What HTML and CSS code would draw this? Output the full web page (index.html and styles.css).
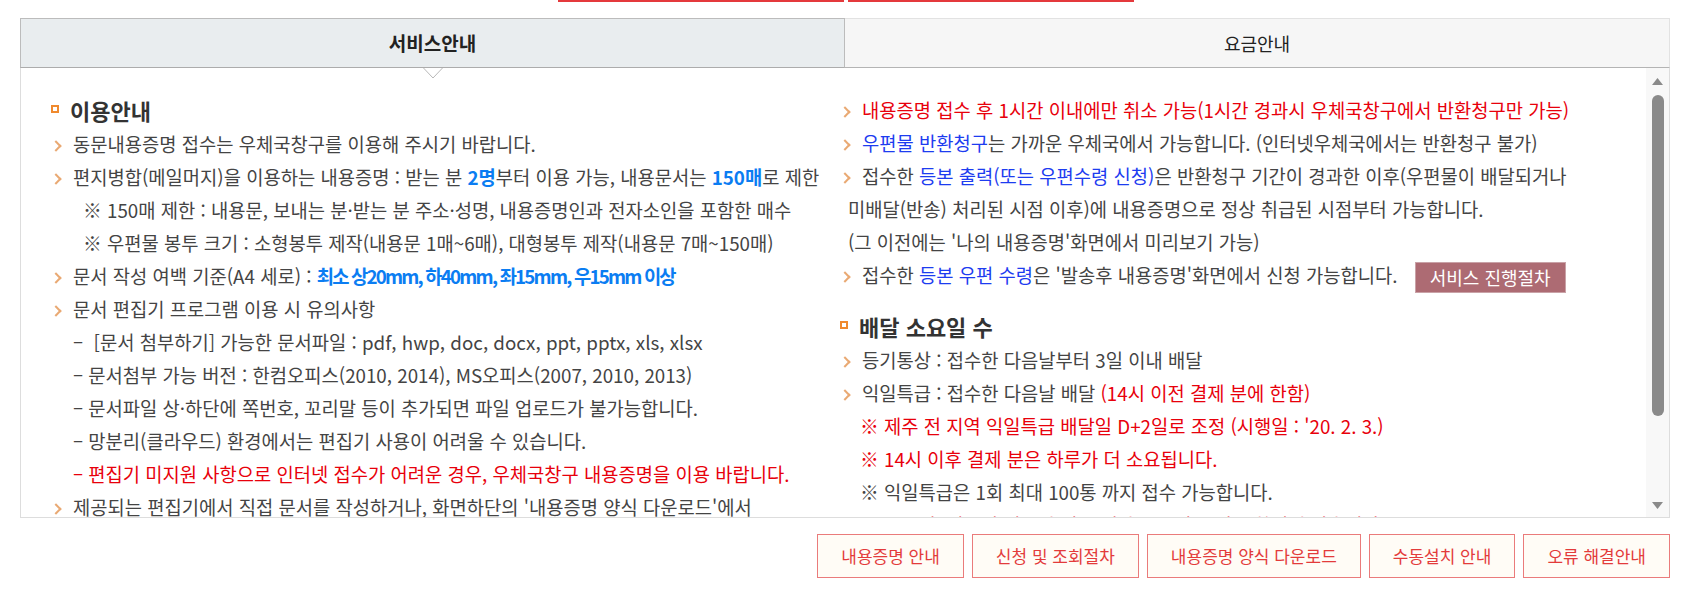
FILE: index.html
```html
<!DOCTYPE html>
<html lang="ko">
<head>
    <meta charset="UTF-8">
    <meta name="viewport" content="width=device-width, initial-scale=1.0">
    <title>내용증명 서비스안내</title>
    <link rel="stylesheet" href="styles.css">
</head>
<body>
    <div class="wrap">
        <!-- 상단 탭 밑줄 (위쪽 메뉴) -->
        <div class="top-line"><span></span><span></span></div>

        <!-- 탭 메뉴 -->
        <div class="tabs">
            <div class="tab on">서비스안내</div>
            <div class="tab">요금안내</div>
        </div>

        <!-- 안내 내용 -->
        <div class="panel">
            <svg class="tab-arrow" width="20" height="11" viewBox="0 0 20 11">
                <polyline points="0.5,0 10,10 19.5,0" fill="#fff" stroke="#b8b8b8" stroke-width="1"/>
            </svg>

            <div class="panel-body">
                <div class="col">
                    <h3 class="sec-title"><i class="sq"></i>이용안내</h3>
                    <ul class="list">
                        <li class="bul">동문내용증명 접수는 우체국창구를 이용해 주시기 바랍니다.</li>
                        <li class="bul">편지병합(메일머지)을 이용하는 내용증명 : 받는 분 <b class="hl">2명</b>부터 이용 가능, 내용문서는 <b class="hl">150매</b>로 제한</li>
                        <li class="note-in">※ 150매 제한 : 내용문, 보내는 분·받는 분 주소·성명, 내용증명인과 전자소인을 포함한 매수</li>
                        <li class="note-in">※ 우편물 봉투 크기 : 소형봉투 제작(내용문 1매~6매), 대형봉투 제작(내용문 7매~150매)</li>
                        <li class="bul">문서 작성 여백 기준(A4 세로) : <b class="hl narrow">최소 상20mm, 하40mm, 좌15mm, 우15mm 이상</b></li>
                        <li class="bul">문서 편집기 프로그램 이용 시 유의사항</li>
                        <li class="dash">–&nbsp; [문서 첨부하기] 가능한 문서파일 : pdf, hwp, doc, docx, ppt, pptx, xls, xlsx</li>
                        <li class="dash">– 문서첨부 가능 버전 : 한컴오피스(2010, 2014), MS오피스(2007, 2010, 2013)</li>
                        <li class="dash">– 문서파일 상·하단에 쪽번호, 꼬리말 등이 추가되면 파일 업로드가 불가능합니다.</li>
                        <li class="dash">– 망분리(클라우드) 환경에서는 편집기 사용이 어려울 수 있습니다.</li>
                        <li class="dash red">– 편집기 미지원 사항으로 인터넷 접수가 어려운 경우, 우체국창구 내용증명을 이용 바랍니다.</li>
                        <li class="bul">제공되는 편집기에서 직접 문서를 작성하거나, 화면하단의 '내용증명 양식 다운로드'에서</li>
                    </ul>
                </div>

                <div class="col">
                    <ul class="list">
                        <li class="bul red">내용증명 접수 후 1시간 이내에만 취소 가능(1시간 경과시 우체국창구에서 반환청구만 가능)</li>
                        <li class="bul"><span class="blue">우편물 반환청구</span>는 가까운 우체국에서 가능합니다. (인터넷우체국에서는 반환청구 불가)</li>
                        <li class="bul hang">접수한 <span class="blue">등본 출력(또는 우편수령 신청)</span>은 반환청구 기간이 경과한 이후(우편물이 배달되거나<br>미배달(반송) 처리된 시점 이후)에 내용증명으로 정상 취급된 시점부터 가능합니다.<br>(그 이전에는 '나의 내용증명'화면에서 미리보기 가능)</li>
                        <li class="bul">접수한 <span class="blue">등본 우편 수령</span>은 '발송후 내용증명'화면에서 신청 가능합니다. <a href="#" class="btn-proc">서비스 진행절차</a></li>
                    </ul>

                    <h3 class="sec-title mt"><i class="sq"></i>배달 소요일 수</h3>
                    <ul class="list">
                        <li class="bul">등기통상 : 접수한 다음날부터 3일 이내 배달</li>
                        <li class="bul">익일특급 : 접수한 다음날 배달 <span class="red">(14시 이전 결제 분에 한함)</span></li>
                        <li class="red">※ 제주 전 지역 익일특급 배달일 D+2일로 조정 (시행일 : '20. 2. 3.)</li>
                        <li class="red">※ 14시 이후 결제 분은 하루가 더 소요됩니다.</li>
                        <li>※ 익일특급은 1회 최대 100통 까지 접수 가능합니다.</li>
                        <li class="red">※ 토요일, 일요일 및 공휴일은 배달 소요일 수에 포함되지 않습니다.</li>
                    </ul>
                </div>
            </div>

            <!-- 스크롤바 -->
            <div class="scroll">
                <svg width="11" height="7" viewBox="0 0 11 7"><polygon points="5.5,0 11,7 0,7" fill="#8a8a8a"/></svg>
                <div class="thumb"></div>
                <div class="spacer"></div>
                <svg width="11" height="7" viewBox="0 0 11 7"><polygon points="0,0 11,0 5.5,7" fill="#8a8a8a"/></svg>
            </div>
        </div>

        <!-- 하단 버튼 -->
        <div class="links">
            <a href="#">내용증명 안내</a>
            <a href="#">신청 및 조회절차</a>
            <a href="#">내용증명 양식 다운로드</a>
            <a href="#">수동설치 안내</a>
            <a href="#">오류 해결안내</a>
        </div>
    </div>
</body>
</html>
```

FILE: styles.css
```css
/* 기본 */
* {
    box-sizing: border-box;
}

body {
    margin: 0;
    background: #fff;
    font-family: "Noto Sans CJK KR", "Noto Sans", sans-serif;
    color: #444;
}

.wrap {
    width: 1650px;
    margin-left: 20px;
}

/* 위쪽 메뉴 밑줄 */
.top-line {
    display: flex;
    gap: 4px;
    height: 2px;
    padding-left: 538px;
}

.top-line span {
    width: 286px;
    background: #e4393c;
}

/* 탭 메뉴 */
.tabs {
    display: grid;
    grid-template-columns: 1fr 1fr;
    margin-top: 16px;
}

.tab {
    height: 50px;
    line-height: 48px;
    text-align: center;
    font-size: 18px;
    color: #222;
    background: #f6f6f6;
    border: 1px solid #e2e2e2;
    border-left: none;
    border-bottom-color: #b4b4b4;
}

.tab.on {
    font-size: 19px;
    background: #e9edef;
    border: 1px solid #bcbcbc;
    border-bottom-color: #acacac;
    font-weight: bold;
}

/* 안내 내용 박스 */
.panel {
    position: relative;
    display: flex;
    height: 450px;
    border: 1px solid #dddddd;
    border-top: none;
}

.tab-arrow {
    position: absolute;
    top: 0;
    left: calc(25% - 10px);
}

.panel-body {
    flex: 1;
    overflow: hidden;
    display: grid;
    grid-template-columns: repeat(2, minmax(0, 1fr));
    align-items: start;
    padding: 25px 17px 0 30px;
}

/* 제목 */
.sec-title {
    display: flex;
    align-items: center;
    margin: 0;
    font-size: 22px;
    line-height: 34px;
    font-weight: bold;
    color: #333;
}

.sec-title.mt {
    margin-top: 16px;
}

.sq {
    width: 8px;
    height: 8px;
    margin: 0 11px 2px 0;
    border: 2px solid #f08a2e;
}

/* 목록 */
.list {
    list-style: none;
    margin: 0;
    padding: 0;
    font-size: 18.75px;
    line-height: 33px;
    white-space: nowrap;
}

.list li {
    padding-left: 20px;
}

.list li.bul::before {
    content: "";
    display: inline-block;
    width: 6px;
    height: 6px;
    margin: 0 13px 0 -19px;
    border-top: 2px solid #e9a973;
    border-right: 2px solid #e9a973;
    transform: rotate(45deg);
    vertical-align: middle;
    position: relative;
    top: -1px;
}

.list li.hang {
    padding-left: 8px;
    text-indent: 12px;
}

.list li.note-in {
    padding-left: 32px;
}

.list li.dash {
    padding-left: 22px;
}

.hl {
    color: #0b7df2;
}

.hl.narrow {
    letter-spacing: -1.8px;
}

.blue {
    color: #1d3cf0;
}

.red {
    color: #e8000b;
}

/* 진행절차 버튼 */
.btn-proc {
    display: inline-block;
    height: 31px;
    margin-left: 12px;
    padding: 0 14px;
    line-height: 29px;
    font-size: 18px;
    text-indent: 0;
    color: #fff;
    text-decoration: none;
    background: #ad6b73;
    border: 1px solid #c9a2a7;
    vertical-align: middle;
}

/* 스크롤바 */
.scroll {
    flex: none;
    width: 23px;
    display: flex;
    flex-direction: column;
    align-items: center;
    padding: 10px 0 8px;
    background: #f8f8f8;
}

.thumb {
    width: 12px;
    height: 321px;
    margin-top: 10px;
    border-radius: 6px;
    background: #8a8a8a;
}

.spacer {
    flex: 1;
}

/* 하단 버튼 */
.links {
    display: flex;
    justify-content: flex-end;
    gap: 8px;
    margin-top: 16px;
}

.links a {
    height: 44px;
    padding: 0 23px;
    line-height: 42px;
    font-size: 17px;
    color: #e33b3b;
    text-decoration: none;
    background: #fffcf6;
    border: 1px solid #ea7b7b;
}
```
